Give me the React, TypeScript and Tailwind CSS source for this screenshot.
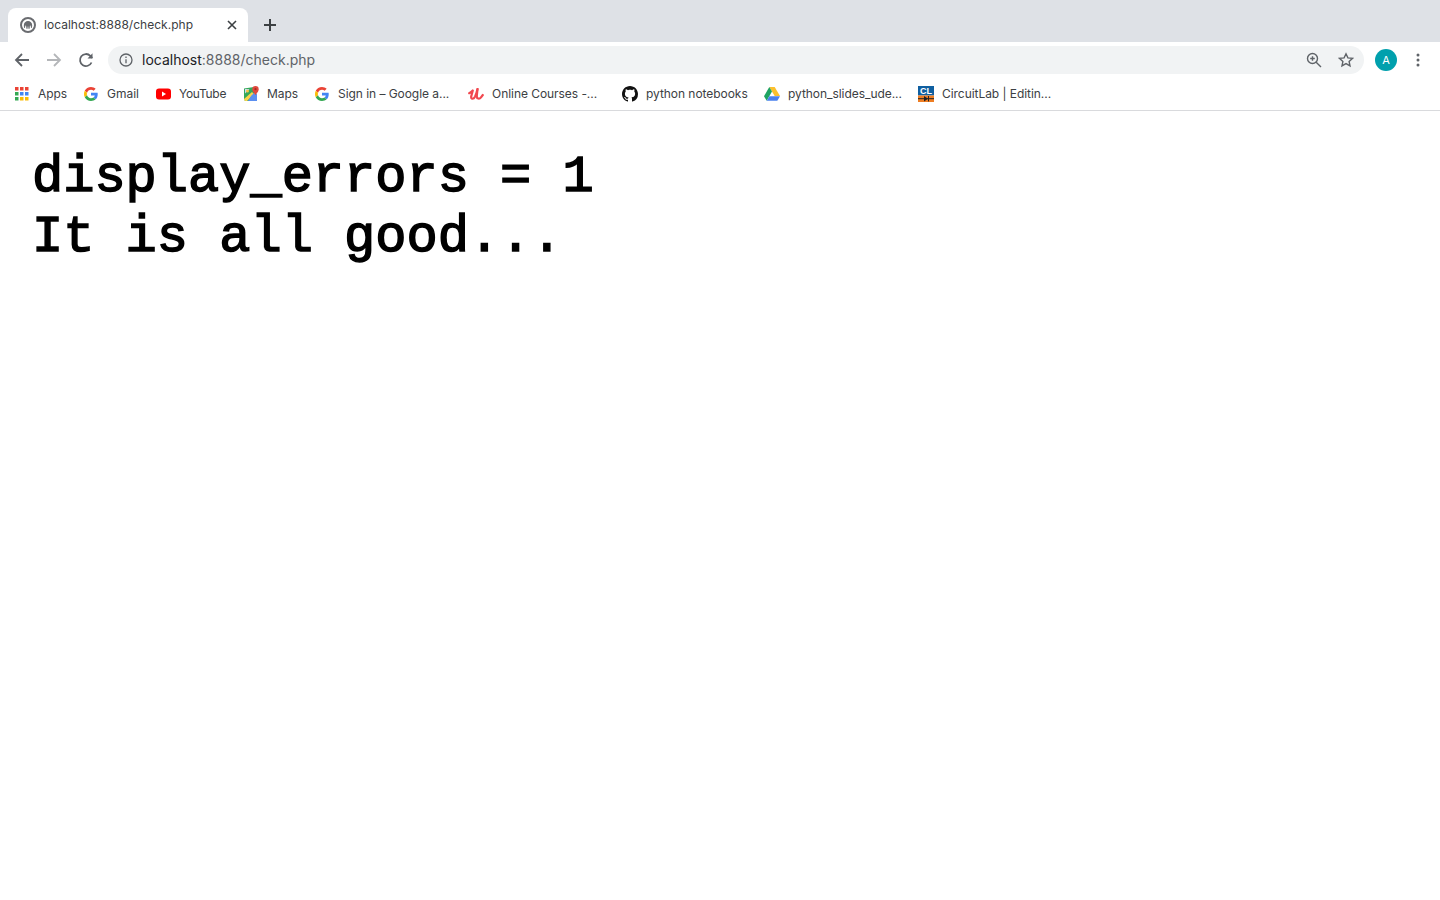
import React from "react";

const G = () => (
  <svg width="14" height="14" viewBox="0 0 48 48">
    <path fill="#EA4335" d="M24 9.500c3.500 0 6.700 1.300 9.100 3.500l6.800-6.800C35.800 2.400 30.300 0 24 0 14.600 0 6.500 5.400 2.600 13.200l7.900 6.200C12.400 13.600 17.700 9.500 24 9.500z" />
    <path fill="#4285F4" d="M47 24.500c0-1.600-.1-3.100-.4-4.500H24v9h13c-.6 3-2.300 5.500-4.800 7.200l7.700 6C44.400 38 47 31.800 47 24.500z" />
    <path fill="#FBBC05" d="M10.500 28.600c-.5-1.400-.8-3-.8-4.600s.3-3.200.8-4.600l-7.900-6.200C.9 16.500 0 20.100 0 24s.9 7.500 2.600 10.800l7.900-6.200z" />
    <path fill="#34A853" d="M24 48c6.500 0 11.900-2.100 15.900-5.800l-7.700-6c-2.100 1.400-4.900 2.300-8.200 2.300-6.300 0-11.600-4.100-13.500-9.900l-7.900 6.200C6.500 42.600 14.600 48 24 48z" />
  </svg>
);

const Apps = () => (
  <svg width="14" height="14" viewBox="0 0 14 14">
    {[
      ["#ea4335", "#ea4335", "#ea4335"],
      ["#34a853", "#4285f4", "#4285f4"],
      ["#34a853", "#fbbc05", "#fbbc05"],
    ].map((r, y) =>
      r.map((c, x) => <rect key={`${x}${y}`} x={x * 5} y={y * 5} width="3.500" height="3.500" fill={c} />)
    )}
  </svg>
);

const YouTube = () => (
  <svg width="15" height="12" viewBox="0 0 15 12">
    <rect x="0" y="0.500" width="15" height="11" rx="3" fill="#ff0000" />
    <path d="M6 3.500v5l4-2.500z" fill="#fff" />
  </svg>
);

const Maps = () => (
  <svg width="16" height="16" viewBox="0 0 16 16" className="translate-x-[1px]">
    <path d="M0 2.500 10 1v14H1.500L0 14z" fill="#35a85a" />
    <path d="M0 13 8 6l2 2-7 7H1.500L0 14z" fill="#fbd34b" />
    <path d="M7 10l3-3 3 1v7H4z" fill="#5b8ff0" />
    <path d="M1 3h4.500L1 7.500z" fill="#c9dbf8" />
    <circle cx="3.500" cy="5" r="1.500" fill="#f6c644" />
    <path d="M11.500 0a3.200 3.200 0 0 1 3.200 3.200C14.700 5.500 11.500 9 11.500 9S8.300 5.500 8.300 3.200A3.200 3.200 0 0 1 11.500 0z" fill="#e0483c" />
    <circle cx="11.500" cy="3.200" r="1.100" fill="#a52a22" />
  </svg>
);

const Udemy = () => (
  <svg width="16" height="14" viewBox="0 0 16 14" fill="none" stroke="#f1484f" strokeLinecap="round" strokeLinejoin="round">
    <path d="M1.200 6.200 C2.800 5.500 4 4.500 4.800 3.500 L3.200 9.500 C2.800 12.300 5.500 12.600 7 9.800 C8 7.800 8.800 5 9.500 2" strokeWidth="2.200" />
    <path d="M9.500 2 L8.800 9 C8.700 12 11.500 12.300 13 10.300 L14.800 8" strokeWidth="2.200" />
  </svg>
);

const GitHub = () => (
  <svg width="16" height="16" viewBox="0 0 16 16" fill="#111">
    <path d="M8 0C3.580 0 0 3.580 0 8c0 3.540 2.290 6.530 5.470 7.590.4.070.55-.17.55-.38 0-.19-.01-.82-.01-1.490-2.010.37-2.530-.49-2.690-.94-.09-.23-.48-.94-.82-1.130-.28-.15-.68-.52-.01-.53.630-.01 1.080.58 1.230.82.720 1.210 1.870.87 2.330.66.070-.52.280-.87.510-1.070-1.780-.2-3.640-.89-3.640-3.950 0-.87.310-1.590.82-2.150-.08-.2-.36-1.020.08-2.120 0 0 .67-.21 2.200.82.640-.18 1.320-.27 2-.27s1.360.09 2 .27c1.530-1.040 2.200-.82 2.200-.82.440 1.100.16 1.920.08 2.120.51.56.82 1.270.82 2.150 0 3.070-1.870 3.750-3.650 3.950.29.25.54.73.54 1.480 0 1.070-.01 1.930-.01 2.200 0 .21.150.46.550.38A8.010 8.010 0 0 0 16 8c0-4.420-3.580-8-8-8z" />
  </svg>
);

const Drive = () => (
  <svg width="16" height="14" viewBox="0 0 16 14">
    <path d="M5.300 0h5.400l5.300 9h-5.300z" fill="#fbc02d" />
    <path d="M5.300 0 0 9.200l2.700 4.600L8 4.600z" fill="#1ea362" />
    <path d="M5.300 9.200H16l-2.700 4.600H2.700z" fill="#4a80ee" />
  </svg>
);

const Circuit = () => (
  <svg width="16" height="16" viewBox="0 0 16 16">
    <rect width="16" height="9.500" fill="#0f5fa0" />
    <rect y="9.500" width="16" height="6.500" fill="#ee7d22" />
    <path d="M0 12.700h16" stroke="#222" strokeWidth="1" />
    <path d="M6 10l4 2.700-4 2.700z" fill="#222" />
    <rect x="10" y="10" width="1" height="5.400" fill="#222" />
    <text x="8" y="8.300" textAnchor="middle" fontSize="9" fontWeight="700" fill="#fff" fontFamily="Liberation Sans, sans-serif">CL</text>
  </svg>
);

const Favicon = () => (
  <svg width="16" height="16" viewBox="0 0 16 16">
    <circle cx="8" cy="8" r="7" fill="#fff" stroke="#6a6c70" strokeWidth="2" />
    <path d="M3.800 8.200C3.800 5.800 5.700 4 8 4s4.200 1.800 4.200 4.200c0 1-.2 2-.5 2.800h-.7l-.4-2.400-.7.200-.3 3H8.400l-.1-2.400H7.700L7.600 11.800H6.400l-.3-3-.7-.2L5 11H4.300c-.3-.8-.5-1.800-.5-2.800z" fill="#6a6c70" />
  </svg>
);

const bookmarks: { icon: React.ReactNode; label: string; box: string; text: string }[] = [
  { icon: <Apps />, label: "Apps", box: "w-[69px]", text: "tracking-[-0.05px]" },
  { icon: <G />, label: "Gmail", box: "w-[72px]", text: "tracking-[0px]" },
  { icon: <YouTube />, label: "YouTube", box: "w-[88px]", text: "tracking-[-0.3px]" },
  { icon: <Maps />, label: "Maps", box: "w-[71px]", text: "tracking-[-0.05px]" },
  { icon: <G />, label: "Sign in – Google a...", box: "w-[154px]", text: "tracking-[-0.05px]" },
  { icon: <Udemy />, label: "Online Courses -...", box: "w-[154px]", text: "tracking-[-0.05px]" },
  { icon: <GitHub />, label: "python notebooks", box: "w-[142px]", text: "tracking-[-0.05px]" },
  { icon: <Drive />, label: "python_slides_ude...", box: "w-[154px]", text: "tracking-[-0.05px]" },
  { icon: <Circuit />, label: "CircuitLab | Editin...", box: "w-[150px]", text: "tracking-[-0.05px]" },
];

export default function App() {
  return (
    <div className="min-h-[900px] bg-white font-['Inter','Liberation_Sans',sans-serif]">
      <div className="flex h-[42px] items-end bg-[#dee1e6] pl-2">
        <div className="flex h-[34px] w-[240px] items-center rounded-t-[8px] bg-white pl-3 pr-[10px]">
          <Favicon />
          <span className="ml-2 flex-1 text-[12px] tracking-[0.03px] text-[#3c4043]">localhost:8888/check.php</span>
          <svg width="12" height="12" viewBox="0 0 12 12" stroke="#3c4043" strokeWidth="1.600">
            <path d="M2 2l8 8M10 2l-8 8" />
          </svg>
        </div>
        <div className="flex h-[34px] w-[44px] items-center justify-center">
          <svg width="14" height="14" viewBox="0 0 14 14" stroke="#3c4043" strokeWidth="2">
            <path d="M7 1v12M1 7h12" />
          </svg>
        </div>
      </div>

      <div className="flex h-[36px] items-center bg-white pl-[14px] pr-[11px]">
        <svg width="16" height="16" viewBox="0 0 16 16" fill="none" stroke="#5f6368" strokeWidth="1.800">
          <path d="M15 8H2M8 2 2 8l6 6" />
        </svg>
        <svg className="ml-4" width="16" height="16" viewBox="0 0 16 16" fill="none" stroke="#b4b6b9" strokeWidth="1.800">
          <path d="M1 8h13M8 2l6 6-6 6" />
        </svg>
        <svg className="ml-4" width="16" height="16" viewBox="0 0 16 16" fill="none" stroke="#5f6368" strokeWidth="1.800">
          <path d="M13.500 10.500A6 6 0 1 1 12.300 3.800L14.300 6" />
          <path d="M14.500 1.300V6.500H9.500" fill="#5f6368" stroke="none" />
        </svg>
        <div className="ml-[14px] flex h-7 flex-1 items-center rounded-full bg-[#f1f3f4] pl-[11px] pr-[10px]">
          <svg width="14" height="14" viewBox="0 0 14 14" fill="none" stroke="#5f6368" strokeWidth="1.300">
            <circle cx="7" cy="7" r="6" />
            <path d="M7 6.200v4M7 3.600v1.400" />
          </svg>
          <span className="ml-[9px] flex-1 pb-[2px] text-[14px] text-[#202124]">
            localhost<span className="text-[#5f6368]">:8888/check.php</span>
          </span>
          <svg width="16" height="16" viewBox="0 0 16 16" fill="none" stroke="#5f6368" strokeWidth="1.400">
            <circle cx="6.500" cy="6.500" r="5" />
            <path d="M10.200 10.200 15 15M4.200 6.500h4.600M6.500 4.200v4.600" />
          </svg>
          <svg className="ml-4" width="16" height="16" viewBox="0 0 16 16" fill="none" stroke="#5f6368" strokeWidth="1.400">
            <path d="M8 1.800l1.900 4.100 4.500.5-3.300 3 .9 4.400L8 11.600l-4 2.200.9-4.400-3.300-3 4.500-.5z" />
          </svg>
        </div>
        <div className="ml-[11px] flex h-[22px] w-[22px] items-center justify-center rounded-full bg-[#00a0ad] text-[11px] text-white">
          A
        </div>
        <svg className="ml-[10px]" width="22" height="16" viewBox="0 0 22 16" fill="#5f6368">
          <circle cx="11" cy="3" r="1.500" />
          <circle cx="11" cy="8" r="1.500" />
          <circle cx="11" cy="13" r="1.500" />
        </svg>
      </div>

      <div className="flex h-[33px] items-center border-b border-[#d9dadd] bg-white pb-[1px] pl-[14px]">
        {bookmarks.map((b) => (
          <div key={b.label + b.box} className={`flex items-center ${b.box}`}>
            <span className="flex w-[16px] shrink-0 items-center justify-center">{b.icon}</span>
            <span className={`ml-2 whitespace-nowrap text-[12px] text-[#3c4043] ${b.text}`}>{b.label}</span>
          </div>
        ))}
      </div>

      <div className="px-8 pt-[37px] font-['Liberation_Mono',monospace] text-[52px] leading-[60px] text-black [-webkit-text-stroke:1.5px_black]">
        <div>display_errors = 1</div>
        <div>It is all good...</div>
      </div>
    </div>
  );
}
